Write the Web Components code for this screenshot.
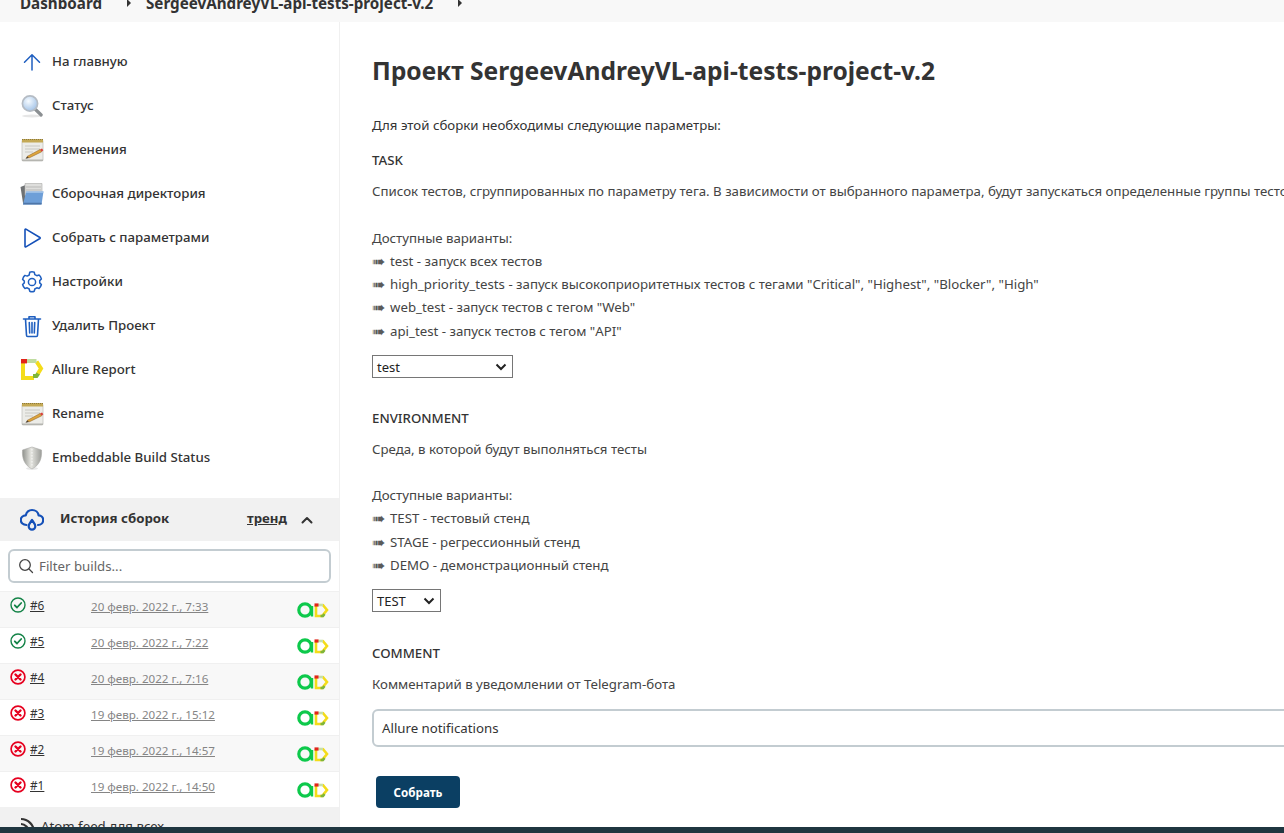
<!DOCTYPE html>
<html lang="ru">
<head>
<meta charset="utf-8">
<title>Проект SergeevAndreyVL-api-tests-project-v.2</title>
<style>
    html, body { margin: 0; height: 100%; overflow: hidden; background: #fff; }
    body { font: 13.25px/23.2px "Noto Sans", "Liberation Sans", sans-serif; color: #333; }
</style>
</head>
<body>
<jk-page>
    <jk-breadcrumbs slot="top">
        <jk-crumb>Dashboard</jk-crumb>
        <jk-crumb>SergeevAndreyVL-api-tests-project-v.2</jk-crumb>
    </jk-breadcrumbs>
    <jk-sidebar slot="side">
        <jk-side-item icon="up">На главную</jk-side-item>
        <jk-side-item icon="search">Статус</jk-side-item>
        <jk-side-item icon="notepad">Изменения</jk-side-item>
        <jk-side-item icon="folder">Сборочная директория</jk-side-item>
        <jk-side-item icon="play">Собрать с параметрами</jk-side-item>
        <jk-side-item icon="gear">Настройки</jk-side-item>
        <jk-side-item icon="trash">Удалить Проект</jk-side-item>
        <jk-side-item icon="allure">Allure Report</jk-side-item>
        <jk-side-item icon="notepad">Rename</jk-side-item>
        <jk-side-item icon="shield">Embeddable Build Status</jk-side-item>
        <jk-build-history slot="history">
            <jk-build-row status="ok" num="#6" date="20 февр. 2022 г., 7:33"></jk-build-row>
            <jk-build-row status="ok" num="#5" date="20 февр. 2022 г., 7:22"></jk-build-row>
            <jk-build-row status="fail" num="#4" date="20 февр. 2022 г., 7:16"></jk-build-row>
            <jk-build-row status="fail" num="#3" date="19 февр. 2022 г., 15:12"></jk-build-row>
            <jk-build-row status="fail" num="#2" date="19 февр. 2022 г., 14:57"></jk-build-row>
            <jk-build-row status="fail" num="#1" date="19 февр. 2022 г., 14:50"></jk-build-row>
        </jk-build-history>
    </jk-sidebar>
    <jk-build-form slot="main" project="SergeevAndreyVL-api-tests-project-v.2">
        <jk-param name="TASK">
            <div>Список тестов, сгруппированных по параметру тега. В зависимости от выбранного параметра, будут запускаться определенные группы тестов</div>
            <br>
            <div>Доступные варианты:</div>
            <jk-option>test - запуск всех тестов</jk-option>
            <jk-option>high_priority_tests - запуск высокоприоритетных тестов с тегами "Critical", "Highest", "Blocker", "High"</jk-option>
            <jk-option>web_test - запуск тестов с тегом "Web"</jk-option>
            <jk-option>api_test - запуск тестов с тегом "API"</jk-option>
            <jk-select slot="control" value="test" width="141"></jk-select>
        </jk-param>
        <jk-param name="ENVIRONMENT">
            <div>Среда, в которой будут выполняться тесты</div>
            <br>
            <div>Доступные варианты:</div>
            <jk-option>TEST - тестовый стенд</jk-option>
            <jk-option>STAGE - регрессионный стенд</jk-option>
            <jk-option>DEMO - демонстрационный стенд</jk-option>
            <jk-select slot="control" value="TEST" width="69"></jk-select>
        </jk-param>
        <jk-param name="COMMENT">
            <div>Комментарий в уведомлении от Telegram-бота</div>
            <jk-text-input slot="control" value="Allure notifications"></jk-text-input>
        </jk-param>
    </jk-build-form>
</jk-page>

<script>
const NOTEPAD = `<svg viewBox="0 0 24 24" width="24" height="24">
    <rect x="2" y="2" width="21" height="21" rx="1" fill="#ecece8" stroke="#c4c4bf" stroke-width=".8"/>
    <rect x="2" y="1" width="21" height="3.5" fill="#c4a955"/>
    <path d="M2 1.5h21" stroke="#8d7a3c" stroke-dasharray="1 1"/>
    <path d="M5 8h15M5 11h15M5 14h8" stroke="#c8c8c2" stroke-width="1"/>
    <path d="M2 21.500h21V23H2z" fill="#b5b5b0"/>
    <path d="M7 18.500l13-7 1.800 2.200L9 20z" fill="#dda53c" stroke="#8a5a20" stroke-width=".5"/>
    <path d="M20 11.500l2-1.100 1.300 1.800-1.500 1.500z" fill="#d8413a"/>
    <path d="M7 18.500l2 1.500-3.500.8z" fill="#4a3b28"/>
</svg>`;

const ICONS = {
    up: `<svg viewBox="0 0 24 24" width="24" height="24" fill="none" stroke="#1f5fc0" stroke-width="1.5" stroke-linecap="round" stroke-linejoin="round"><path d="M12 20V5M4.500 12.200L12 4.800l7.500 7.400"/></svg>`,
    search: `<svg viewBox="0 0 24 24" width="24" height="24">
        <defs><radialGradient id="g" cx=".4" cy=".35" r=".7"><stop offset="0" stop-color="#f6fbff"/><stop offset="1" stop-color="#9fc0e6"/></radialGradient></defs>
        <ellipse cx="12" cy="22" rx="10" ry="1.500" fill="#e6e6e6"/>
        <path d="M15 15l6.200 6" stroke="#8b8f92" stroke-width="3.200" stroke-linecap="round"/>
        <circle cx="10" cy="9.500" r="7.600" fill="url(#g)" stroke="#b5bcc4" stroke-width="1.700"/>
    </svg>`,
    notepad: NOTEPAD,
    folder: `<svg viewBox="0 0 24 24" width="24" height="24">
        <path d="M0.500 5l5-2v18H3z" fill="#6f7274"/>
        <path d="M5 1.500h17v12H5z" fill="#dededc" stroke="#a9a9a7" stroke-width=".6"/>
        <path d="M6 5h15M6 8h15" stroke="#b9b9b7"/>
        <path d="M3 22.500L6.200 9.500h17.300L21.500 22.500z" fill="#6e9fd8"/>
        <path d="M3 22.500l.4-1.800h18.400l-.3 1.800z" fill="#4e76a8"/>
        <path d="M6.200 9.500h17.300l-.3 1.200H5.900z" fill="#a8c8ec"/>
    </svg>`,
    play: `<svg viewBox="0 0 24 24" width="24" height="24" fill="none" stroke="#1450b8" stroke-width="1.600" stroke-linejoin="round"><path d="M5 3.600v16.800a.6.6 0 0 0 .9.5l14-8.400a.6.6 0 0 0 0-1L5.900 3.100a.6.6 0 0 0-.9.5z"/></svg>`,
    gear: `<svg viewBox="0 0 24 24" width="24" height="24" fill="none" stroke="#1f5fc0" stroke-width="1.500" stroke-linejoin="round"><circle cx="12" cy="12" r="3.600"/><path d="M9.700 2.300c1-.4 3.600-.4 4.600 0l.5 2.300 2 1.100 2.300-.7c.8.7 2 2.900 2.300 4l-1.700 1.600v2.300l1.700 1.600c-.3 1.100-1.500 3.300-2.300 4l-2.300-.7-2 1.200-.5 2.200c-1 .4-3.600.4-4.600 0l-.5-2.200-2-1.200-2.300.7c-.8-.7-2-2.900-2.300-4l1.700-1.600V11l-1.700-1.600c.3-1.100 1.500-3.300 2.300-4l2.300.7 2-1.100z"/></svg>`,
    trash: `<svg viewBox="0 0 24 24" width="24" height="24" fill="none" stroke="#1f5fc0" stroke-width="1.600" stroke-linecap="round" stroke-linejoin="round"><path d="M3.500 5h17M9 5V2.800h6V5M5.500 5l1 16.200c0 .7.5 1.300 1.200 1.300h8.600c.7 0 1.200-.6 1.200-1.300L18.500 5M9.300 8.500l.4 10.500M12 8.500V19M14.700 8.500L14.300 19"/></svg>`,
    allure: `<svg viewBox="0 0 24 24" width="24" height="24" fill="none" stroke-width="4">
        <path d="M3 2v18h11" stroke="#f4dc1a"/>
        <path d="M13 18h3.500l2-2.800" stroke="#7fb539"/>
        <path d="M18 15.500l3-5-4.500-7" stroke="#f4dc1a"/>
        <path d="M7 3h9.500" stroke="#bfdca0"/>
        <path d="M1 3.200h6" stroke="#e2231a" stroke-width="4.400"/>
    </svg>`,
    shield: `<svg viewBox="0 0 24 24" width="24" height="24">
        <defs><linearGradient id="s" x1="0" x2="1"><stop offset="0" stop-color="#8f918c"/><stop offset=".45" stop-color="#e6e6e1"/><stop offset="1" stop-color="#9b9c98"/></linearGradient></defs>
        <ellipse cx="12" cy="22.500" rx="6" ry="1.300" fill="#e8e8e8"/>
        <path d="M12 1l9.500 3c.6 8-1.600 15-9.500 19C4.100 19 1.900 12 2.500 4z" fill="url(#s)" stroke="#a9aaa6" stroke-width=".6"/>
        <path d="M12 3v18" stroke="#fff" stroke-width=".8" stroke-dasharray="1.500 1.500"/>
    </svg>`,
    ok: `<svg viewBox="0 0 16 16" width="16" height="16" fill="none" stroke="#138347" stroke-width="1.400" stroke-linecap="round" stroke-linejoin="round"><circle cx="8" cy="8" r="7"/><path d="M4.800 8.300l2.200 2.200 4.200-4.500" stroke-width="1.800"/></svg>`,
    fail: `<svg viewBox="0 0 16 16" width="16" height="16" fill="none" stroke="#e6001f" stroke-width="1.700" stroke-linecap="round"><circle cx="8" cy="8" r="6.900"/><path d="M5.500 5.500l5 5M10.500 5.500l-5 5" stroke-width="2.400"/></svg>`,
    allureSmall: `<svg viewBox="0 0 32 16" width="32" height="16" fill="none">
        <circle cx="8" cy="8" r="6.200" stroke="#0dc94b" stroke-width="3.200"/>
        <path d="M15 4v10.500" stroke="#0dc94b" stroke-width="2.400"/>
        <path d="M19 3v11h7" stroke="#f4dc1a" stroke-width="2.600"/>
        <path d="M25.500 13.500l4.500-5.500-4.500-5.500" stroke="#f4dc1a" stroke-width="2.600"/>
        <path d="M21 3h5" stroke="#c7dfa8" stroke-width="2.600"/>
        <path d="M17.500 3h4" stroke="#e2231a" stroke-width="3.200"/>
        <path d="M23.500 14h2.500l1.500-2" stroke="#7fb539" stroke-width="2.600"/>
    </svg>`
};

class JkPage extends HTMLElement {
    constructor() {
        super();
        this.attachShadow({ mode: 'open' });
        this.shadowRoot.innerHTML = `
            <style>
                :host { display: flex; flex-direction: column; height: 833px; overflow: hidden; }
                .columns { display: flex; flex: 1; min-height: 0; }
                .side { flex: 0 0 340px; }
                .main { flex: 1; min-width: 0; overflow: hidden; }
                footer { flex: 0 0 6px; background: #1f3640; }
            </style>
            <slot name="top"></slot>
            <div class="columns">
                <div class="side"><slot name="side"></slot></div>
                <div class="main"><slot name="main"></slot></div>
            </div>
            <footer></footer>`;
    }
}

class JkBreadcrumbs extends HTMLElement {
    constructor() {
        super();
        this.attachShadow({ mode: 'open' });
        this.shadowRoot.innerHTML = `
            <style>
                :host { display: block; height: 22px; background: #f8f8f8; overflow: hidden; }
                .bar { display: flex; align-items: center; height: 20px; margin-top: -7px; padding-left: 20px; }
            </style>
            <div class="bar"><slot></slot></div>`;
    }
}

class JkCrumb extends HTMLElement {
    constructor() {
        super();
        this.attachShadow({ mode: 'open' });
        this.shadowRoot.innerHTML = `
            <style>
                :host { display: flex; align-items: center; gap: 25px; margin-right: 15px; font-size: 15.2px; font-weight: 700; line-height: 20px; color: #333; }
                i { width: 0; height: 0; border-left: 4px solid #333; border-top: 4px solid transparent; border-bottom: 4px solid transparent; }
            </style>
            <slot></slot>
            <i></i>`;
    }
}

class JkSidebar extends HTMLElement {
    constructor() {
        super();
        this.attachShadow({ mode: 'open' });
        this.shadowRoot.innerHTML = `
            <style>
                :host { display: block; height: 100%; box-sizing: border-box; border-right: 1px solid #f0f0f0; overflow: hidden; background: #fff; }
                nav { padding-top: 18px; margin-bottom: 18px; }
            </style>
            <nav><slot></slot></nav>
            <slot name="history"></slot>`;
    }
}

class JkSideItem extends HTMLElement {
    constructor() {
        super();
        this.attachShadow({ mode: 'open' });
        this.shadowRoot.innerHTML = `
            <style>
                :host { display: flex; align-items: center; gap: 8px; height: 44px; padding-left: 20px; font-weight: 500; color: #333; }
                .icon { width: 24px; height: 24px; flex: none; display: block; margin-top: -1px; }
                svg { display: block; }
            </style>
            <span class="icon">${ICONS[this.getAttribute('icon')] || ''}</span>
            <slot></slot>`;
    }
}

class JkBuildHistory extends HTMLElement {
    constructor() {
        super();
        this.attachShadow({ mode: 'open' });
        this.shadowRoot.innerHTML = `
            <style>
                :host { display: block; }
                header { display: flex; align-items: center; height: 43px; background: #f1f1f1; padding-left: 20px; font-weight: 700; }
                .cloud { width: 24px; height: 24px; margin-right: 16px; }
                .title { flex: 1; margin-top: -2px; }
                .trend { text-decoration: underline; margin: -2px 13px 0 0; }
                .chev { width: 14px; height: 14px; margin-right: 25px; }
                .filter { padding: 8px; background: #fff; }
                .box { display: flex; align-items: center; gap: 5px; height: 34px; box-sizing: border-box; padding-left: 8px; border: 2px solid #c3ccd1; border-radius: 6px; color: #666; }
                .box span { margin-top: 1px; }
                svg { display: block; }
                ::slotted(jk-build-row:nth-child(odd)) { background: #f8f8f8; }
                footer { display: flex; align-items: flex-start; gap: 5px; height: 20px; padding: 10px 0 0 20px; box-sizing: border-box; background: #f1f1f1; color: #333; line-height: 18px; overflow: hidden; }
                .rss { width: 16px; height: 16px; }
            </style>
            <header>
                <svg class="cloud" viewBox="0 0 24 24" fill="none" stroke="#1450b8" stroke-width="2.200" stroke-linecap="round" stroke-linejoin="round"><path d="M6.500 17C3 17 .8 14.800 .8 12c0-2.700 2.200-4.600 4.900-4.600C6.500 4.200 9 2 12 2c3.600 0 6.200 2.400 6.600 5.400 2.700 0 4.600 2 4.600 4.600 0 2.800-2.200 5-5.200 5"/><path d="M12 12c-2 2.800-3.300 4.300-3.300 6.300a3.300 3.300 0 0 0 6.600 0c0-2-1.300-3.500-3.300-6.300z"/></svg>
                <span class="title">История сборок</span>
                <span class="trend">тренд</span>
                <svg class="chev" viewBox="0 0 14 14" fill="none" stroke="#333" stroke-width="2" stroke-linecap="round" stroke-linejoin="round"><path d="M2.500 9.500L7 5l4.500 4.500"/></svg>
            </header>
            <div class="filter">
                <div class="box">
                    <svg width="16" height="16" viewBox="0 0 16 16" fill="none" stroke="#444" stroke-width="1.300" stroke-linecap="round"><circle cx="7" cy="7" r="5.300"/><path d="M11 11l3.500 3.500"/></svg>
                    <span>Filter builds...</span>
                </div>
            </div>
            <slot></slot>
            <footer>
                <svg class="rss" viewBox="0 0 16 16" fill="none" stroke="#333" stroke-width="2.200"><path d="M1 2c7 0 13 6 13 13M1 7c4 0 8 4 8 8"/><circle cx="3" cy="13" r="1.500" fill="#333"/></svg>
                <span>Atom feed для всех</span>
            </footer>`;
    }
}

class JkBuildRow extends HTMLElement {
    constructor() {
        super();
        this.attachShadow({ mode: 'open' });
        const status = this.getAttribute('status');
        this.shadowRoot.innerHTML = `
            <style>
                :host { display: grid; grid-template-columns: 20px 61px 206px 32px; height: 36px; box-sizing: border-box; padding: 5px 0 0 10px; border-top: 1px solid #f0f0f0; align-items: start; line-height: 16px; }
                svg { display: block; }
                .num { color: #333; text-decoration: underline; font-size: 11.8px; margin-top: 0; }
                .date { color: #858585; text-decoration: underline; font-size: 11.6px; margin-top: 2px; }
                .allure { margin-top: 5px; }
            </style>
            <span>${ICONS[status]}</span>
            <span class="num">${this.getAttribute('num')}</span>
            <span class="date">${this.getAttribute('date')}</span>
            <span class="allure">${ICONS.allureSmall}</span>`;
    }
}

class JkBuildForm extends HTMLElement {
    constructor() {
        super();
        this.attachShadow({ mode: 'open' });
        this.shadowRoot.innerHTML = `
            <style>
                :host { display: block; padding: 33px 0 0 32px; white-space: nowrap; }
                h1 { margin: 0 0 27px; font-size: 24.6px; line-height: 32px; font-weight: 700; color: #333; }
                p { margin: 0 0 12px; }
                button { display: block; margin: 29px 0 0 4px; width: 84px; height: 32px; border: 0; border-radius: 4px; background: #0b3f63; color: #fff; font: 700 11.6px "Noto Sans", sans-serif; }
            </style>
            <h1>Проект ${this.getAttribute('project')}</h1>
            <p>Для этой сборки необходимы следующие параметры:</p>
            <slot></slot>
            <button type="button">Собрать</button>`;
    }
}

class JkParam extends HTMLElement {
    constructor() {
        super();
        this.attachShadow({ mode: 'open' });
        this.shadowRoot.innerHTML = `
            <style>
                :host { display: block; margin-bottom: 28.4px; }
                :host(:last-of-type) { margin-bottom: 0; padding-top: 1px; }
                .name { font-weight: 500; margin-bottom: 8px; color: #333; }
                .desc { color: #444; }
                .control { margin-top: 12.4px; }
                :host(:last-of-type) .control { margin-top: 13px; }
            </style>
            <div class="name">${this.getAttribute('name')}</div>
            <div class="desc"><slot></slot></div>
            <div class="control"><slot name="control"></slot></div>`;
    }
}

class JkOption extends HTMLElement {
    constructor() {
        super();
        this.attachShadow({ mode: 'open' });
        this.shadowRoot.innerHTML = `
            <style>
                :host { display: flex; }
                .arrow { flex: 0 0 18px; font-size: 16px; color: #5a5a5a; }
            </style>
            <span class="arrow">➠</span>
            <slot></slot>`;
    }
}

class JkSelect extends HTMLElement {
    constructor() {
        super();
        this.attachShadow({ mode: 'open' });
        this.shadowRoot.innerHTML = `
            <style>
                :host { display: block; }
                .sel { display: flex; align-items: center; justify-content: space-between; box-sizing: border-box; height: 23px; padding: 0 5px 0 4px; border: 1px solid #767676; background: #fff; color: #222; font-size: 13px; }
                .sel span { margin-top: 1px; }
                svg { display: block; }
            </style>
            <div class="sel" style="width:${this.getAttribute('width')}px">
                <span>${this.getAttribute('value')}</span>
                <svg width="12" height="8" viewBox="0 0 12 8" fill="none" stroke="#222" stroke-width="2"><path d="M1.500 1.500L6 6l4.500-4.500"/></svg>
            </div>`;
    }
}

class JkTextInput extends HTMLElement {
    constructor() {
        super();
        this.attachShadow({ mode: 'open' });
        this.shadowRoot.innerHTML = `
            <style>
                :host { display: block; }
                .box { display: flex; align-items: center; width: 1100px; height: 38px; box-sizing: border-box; padding-left: 8px; border: 2px solid #c3ccd1; border-radius: 6px; color: #333; }
            </style>
            <div class="box">${this.getAttribute('value')}</div>`;
    }
}

customElements.define('jk-page', JkPage);
customElements.define('jk-breadcrumbs', JkBreadcrumbs);
customElements.define('jk-crumb', JkCrumb);
customElements.define('jk-sidebar', JkSidebar);
customElements.define('jk-side-item', JkSideItem);
customElements.define('jk-build-history', JkBuildHistory);
customElements.define('jk-build-row', JkBuildRow);
customElements.define('jk-build-form', JkBuildForm);
customElements.define('jk-param', JkParam);
customElements.define('jk-option', JkOption);
customElements.define('jk-select', JkSelect);
customElements.define('jk-text-input', JkTextInput);
</script>
</body>
</html>
